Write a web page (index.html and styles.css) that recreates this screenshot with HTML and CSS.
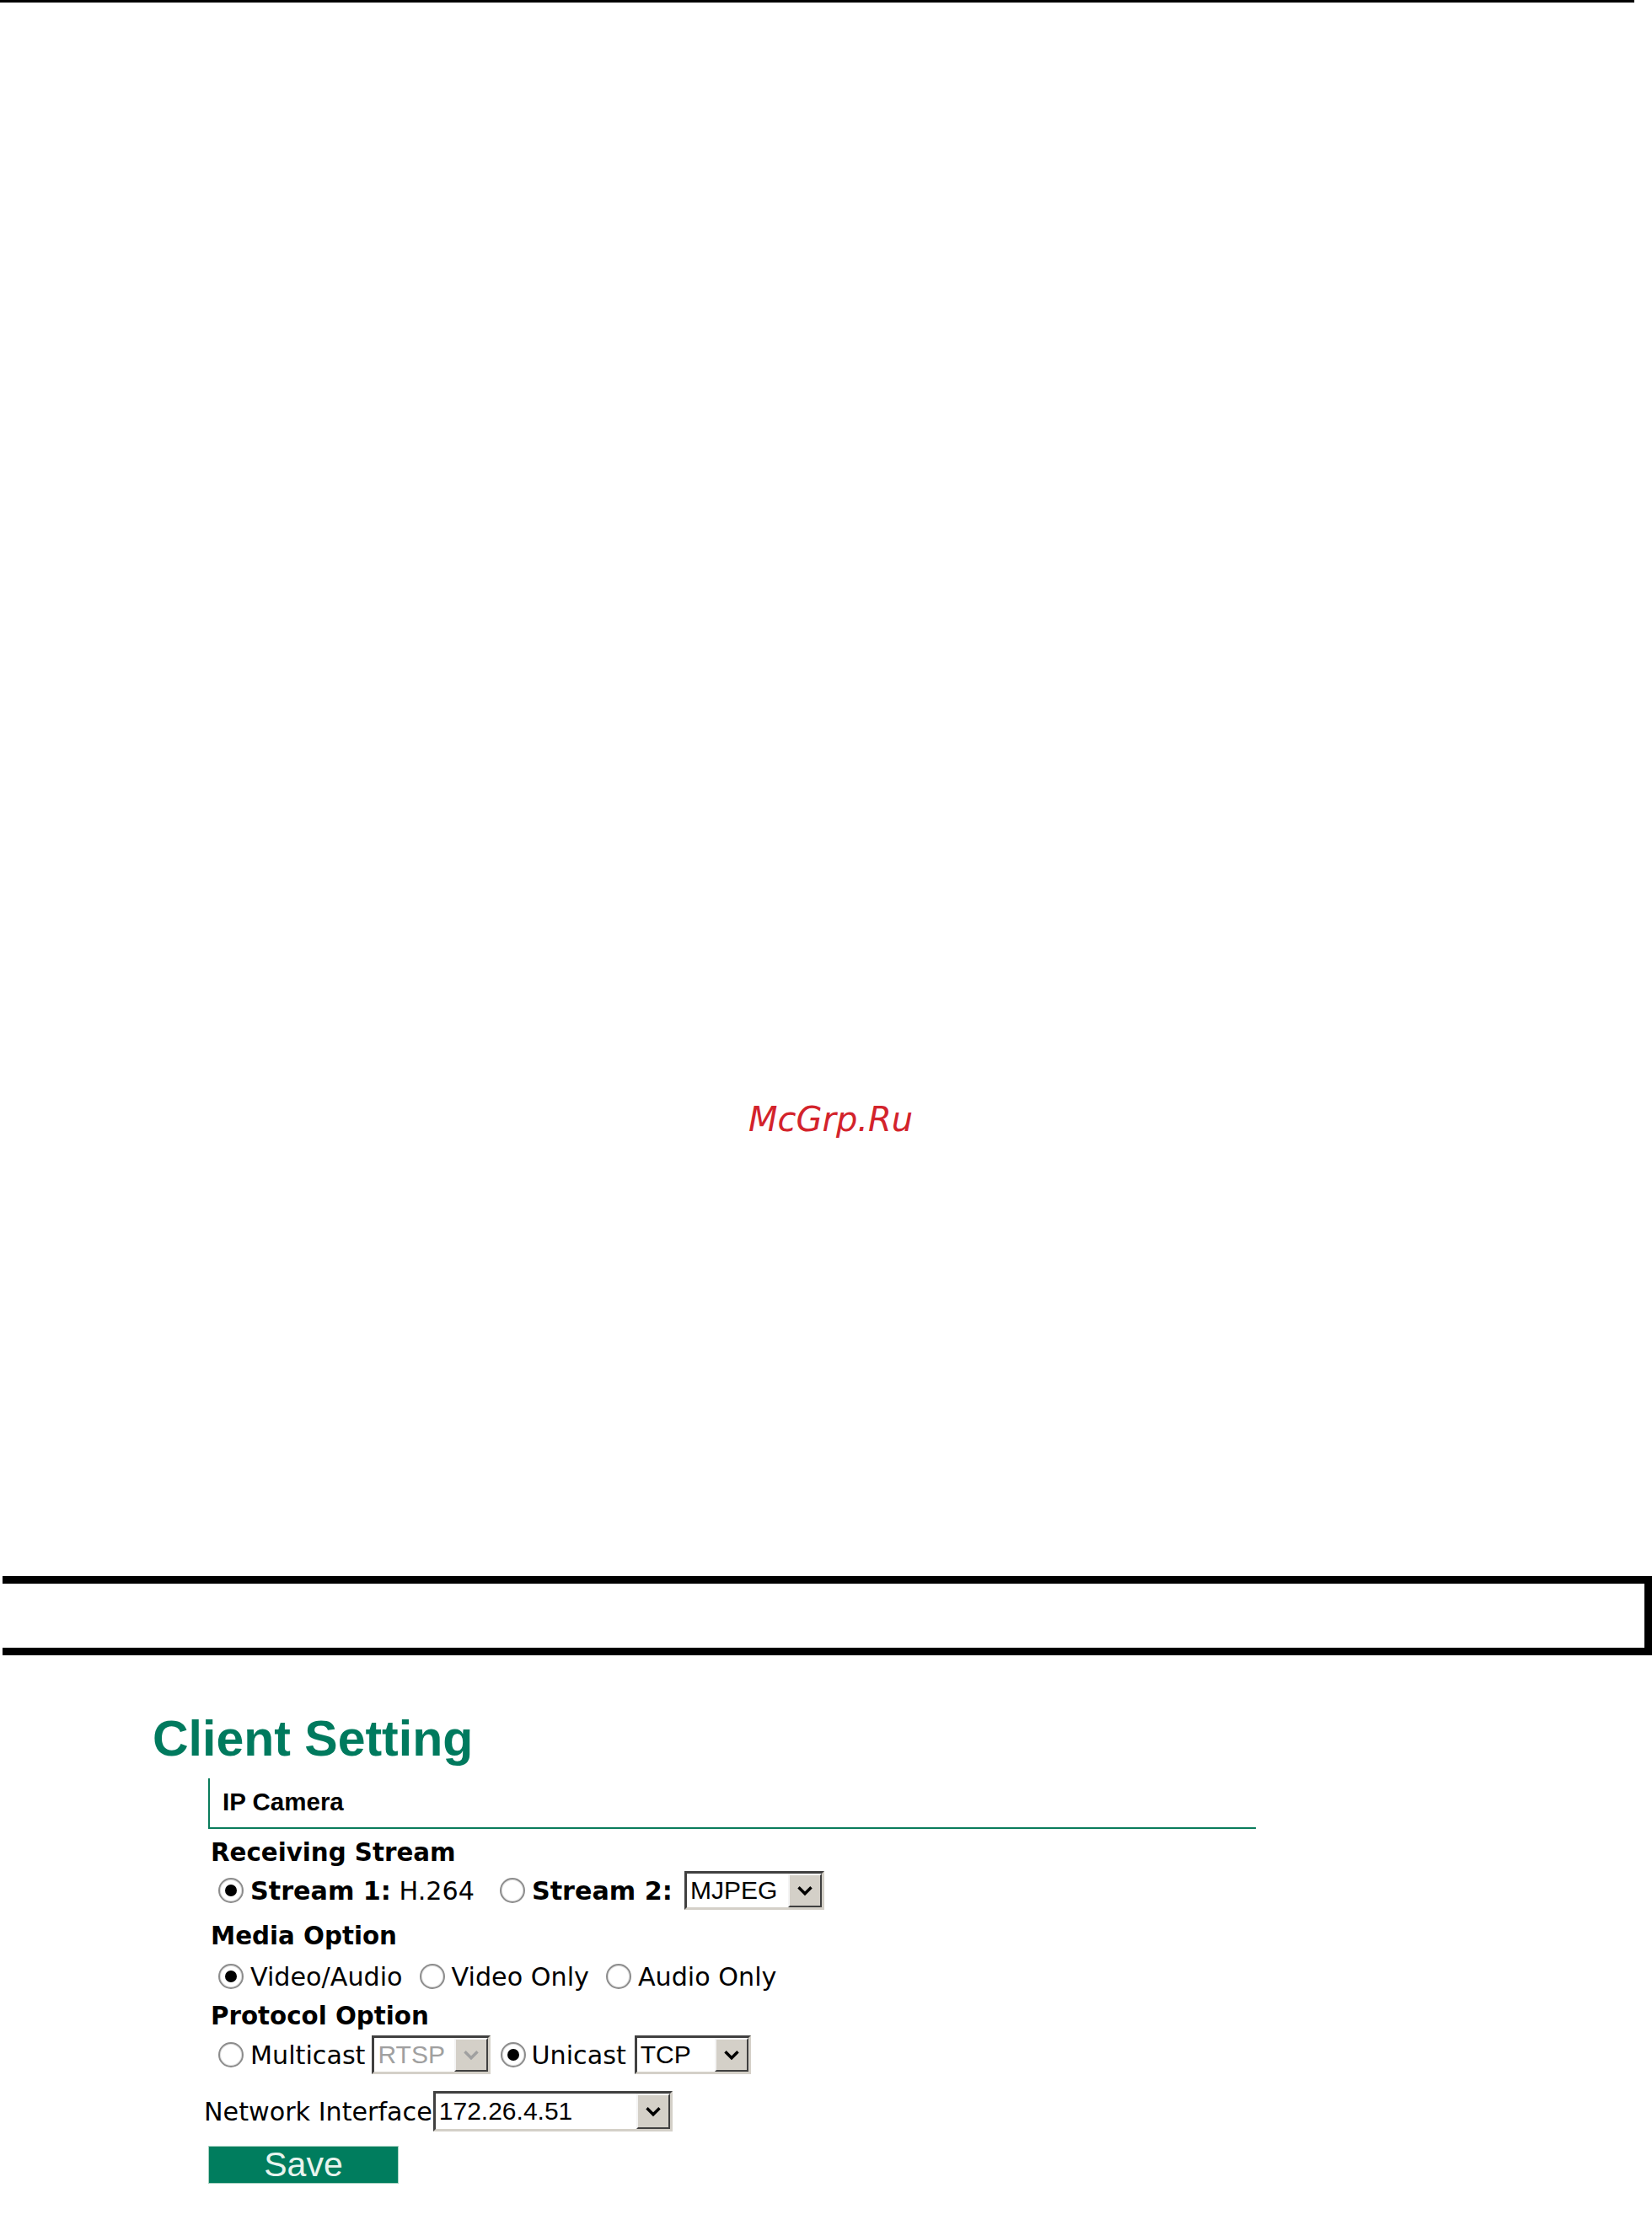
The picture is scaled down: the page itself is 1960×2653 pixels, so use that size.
FILE: index.html
```html
<!DOCTYPE html>
<html>
<head>
<meta charset="utf-8">
<title>Client Setting</title>
<link rel="stylesheet" href="styles.css">
</head>
<body>
<div class="topline"></div>
<div class="watermark">McGrp.Ru</div>
<div class="frame"></div>
<h1 class="title">Client Setting</h1>
<div class="tab"><span class="tab-label">IP Camera</span></div>
<div class="form">
  <div class="head">Receiving Stream</div>
  <div class="row row-stream">
    <span class="radio on"></span><span class="lbl"><b>Stream 1:</b> H.264</span>
    <span class="radio r-s2"></span><span class="lbl"><b>Stream 2:</b></span>
    <div class="sel sel-mjpeg"><span class="val">MJPEG</span><span class="btn"><svg viewBox="0 0 20 14" class="chev"><path d="M3 3 L10 10 L17 3" /></svg></span></div>
  </div>
  <div class="head head-media">Media Option</div>
  <div class="row row-media">
    <span class="radio on"></span><span class="lbl">Video/Audio</span>
    <span class="radio r-gap"></span><span class="lbl">Video Only</span>
    <span class="radio r-gap"></span><span class="lbl">Audio Only</span>
  </div>
  <div class="head head-proto">Protocol Option</div>
  <div class="row row-proto">
    <span class="radio"></span><span class="lbl">Multicast</span>
    <div class="sel sel-rtsp disabled"><span class="val">RTSP</span><span class="btn"><svg viewBox="0 0 20 14" class="chev"><path d="M3 3 L10 10 L17 3" /></svg></span></div>
    <span class="radio on r-uni"></span><span class="lbl lbl-uni">Unicast</span>
    <div class="sel sel-tcp"><span class="val">TCP</span><span class="btn"><svg viewBox="0 0 20 14" class="chev"><path d="M3 3 L10 10 L17 3" /></svg></span></div>
  </div>
  <div class="row row-net">
    <span class="lbl">Network Interface</span>
    <div class="sel sel-net"><span class="val">172.26.4.51</span><span class="btn"><svg viewBox="0 0 20 14" class="chev"><path d="M3 3 L10 10 L17 3" /></svg></span></div>
  </div>
  <div class="save">Save</div>
</div>
</body>
</html>
```
FILE: styles.css
```css
html, body {
  margin: 0;
  padding: 0;
  background: #ffffff;
}
body {
  width: 1960px;
  height: 2653px;
  overflow: hidden;
  font-family: "DejaVu Sans", Verdana, sans-serif;
  color: #000;
}
.topline {
  width: 1939px;
  height: 3px;
  background: #000;
}
.watermark {
  margin-top: 1305px;
  padding-left: 888px;
  font-family: "DejaVu Sans", sans-serif;
  font-style: oblique;
  font-size: 40px;
  line-height: 40px;
  height: 40px;
  color: #d3232b;
}
.frame {
  margin-top: 522px;
  margin-left: 3px;
  width: 1957px;
  height: 94px;
  box-sizing: border-box;
  border-top: 9px solid #000;
  border-right: 9px solid #000;
  border-bottom: 9px solid #000;
}
.title {
  margin: 70px 0 0 181px;
  font-family: "Liberation Sans", Arial, sans-serif;
  font-weight: bold;
  font-size: 59px;
  line-height: 58px;
  height: 58px;
  color: #007a5e;
}
.tab {
  margin-top: 18px;
  margin-left: 247px;
  width: 1243px;
  box-sizing: border-box;
  border-left: 2px solid #0a7c5c;
  border-bottom: 2px solid #0a7c5c;
  padding: 13px 0 16px 15px;
}
.tab-label {
  display: block;
  font-family: "Liberation Sans", Arial, sans-serif;
  font-weight: bold;
  font-size: 29.5px;
  line-height: 29px;
  height: 29px;
}
.form {
  padding-left: 250px;
}
.head {
  margin-top: 13px;
  height: 30px;
  line-height: 30px;
  font-weight: bold;
  font-size: 29.3px;
}
.head-media { margin-top: 16px; }
.head-proto { margin-top: 9px; }
.row {
  display: flex;
  align-items: center;
  height: 46px;
  padding-left: 9px;
  font-size: 30.2px;
  white-space: nowrap;
}
.row-stream { margin-top: 7px; }
.row-media { margin-top: 10px; }
.row-proto { margin-top: 8px; }
.row-net {
  margin-top: 20px;
  margin-left: -8px;
  padding-left: 0;
  height: 48px;
}
.lbl b { font-weight: bold; }
.radio {
  flex: none;
  width: 30px;
  height: 30px;
  box-sizing: border-box;
  border-radius: 50%;
  border: 2px solid #8c8c8c;
  background: #fff;
  box-shadow: inset 0 0 0 1px #e2e2e2;
  display: inline-flex;
  align-items: center;
  justify-content: center;
  margin-right: 8px;
}
.radio.on::after {
  content: "";
  width: 14px;
  height: 14px;
  border-radius: 50%;
  background: #000;
}
.r-s2 { margin-left: 30px; }
.r-gap { margin-left: 20px; }
.r-uni { margin-left: 12px; margin-right: 6px; }
.sel {
  flex: none;
  display: flex;
  box-sizing: border-box;
  height: 46px;
  border-top: 3px solid #404040;
  border-left: 3px solid #404040;
  border-right: 3px solid #d4d0c8;
  border-bottom: 3px solid #d4d0c8;
  background: #fff;
  font-family: "Liberation Sans", Arial, sans-serif;
  font-size: 30px;
}
.sel .val {
  flex: 1;
  padding-left: 4px;
  line-height: 40px;
  overflow: hidden;
}
.sel .btn {
  flex: none;
  width: 40px;
  box-sizing: border-box;
  background: #d4d0c8;
  border-left: 2px solid #f4f4f4;
  border-top: 2px solid #f4f4f4;
  border-right: 2px solid #404040;
  border-bottom: 2px solid #404040;
  display: flex;
  align-items: center;
  justify-content: center;
}
.chev {
  width: 22px;
  height: 15px;
}
.chev path {
  fill: none;
  stroke: #000;
  stroke-width: 3.2;
}
.sel-mjpeg { width: 166px; margin-left: 14px; }
.sel-rtsp { width: 141px; margin-left: 8px; }
.sel-tcp { width: 138px; margin-left: 10px; }
.sel-net { width: 284px; height: 48px; margin-left: 1px; }
.sel-net .val { line-height: 42px; }
.disabled .val { color: #a0a0a0; }
.disabled .chev path { stroke: #a0a0a0; }
.save {
  margin-top: 17px;
  margin-left: -3px;
  width: 226px;
  height: 45px;
  box-sizing: border-box;
  background: #007d5e;
  border: 1px solid #a8d2c2;
  color: #e8f4ee;
  font-family: "Liberation Sans", Arial, sans-serif;
  font-size: 41px;
  line-height: 43px;
  text-align: center;
}
```
